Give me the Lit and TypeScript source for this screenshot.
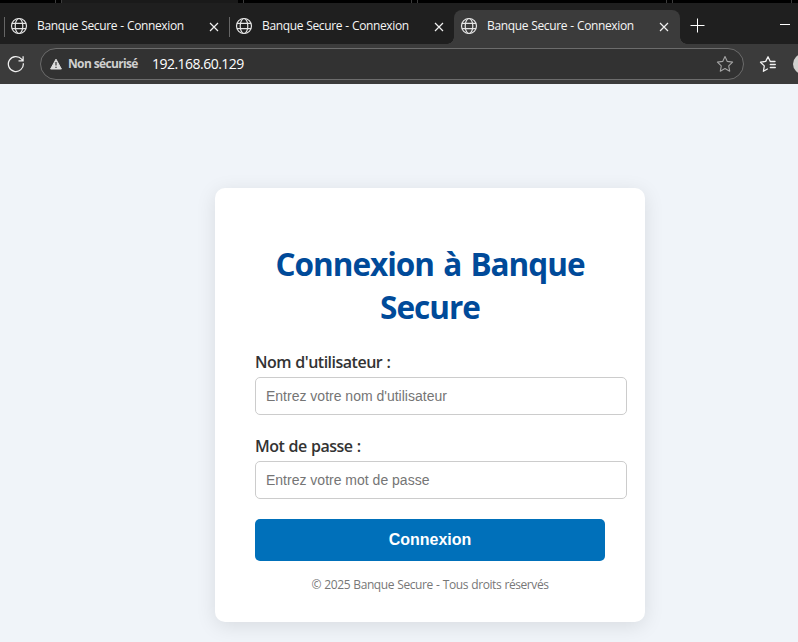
import { LitElement, html, css, svg } from "lit";
import { customElement, property } from "lit/decorators.js";

const globe = svg`<svg class="globe" width="18" height="18" viewBox="0 0 18 18" fill="none" stroke="#e4e4e4" stroke-width="1.2">
  <circle cx="9" cy="9" r="7.5"/><ellipse cx="9" cy="9" rx="3.8" ry="7.5"/><path d="M2 6.3h14M2 11.7h14"/></svg>`;

@customElement("browser-tab")
class BrowserTab extends LitElement {
  @property() label = "";
  static styles = css`
    :host { display: flex; align-items: center; box-sizing: border-box; width: 225px; height: 34px; flex: none; position: relative;
      padding: 0 0 2px 6px; color: #f5f5f5; font: 12px/16px "Open Sans", "Noto Sans", sans-serif; }
    .globe { flex: none; }
    .label { width: 152px; flex: none; margin-left: 9px; white-space: nowrap; letter-spacing: -0.36px; word-spacing: 0.4px; }
    .close { margin: 1px 0 0 20px; flex: none; }
    :host(:not([active]))::before { content: ""; position: absolute; left: 0; top: 7px; width: 1px; height: 20px; background: #666; }
    :host([active]) { width: 226px; background: #3b3b3b; border-radius: 8px 8px 0 0; }
    :host([active])::before, :host([active])::after { content: ""; position: absolute; bottom: 0; width: 7px; height: 7px; }
    :host([active])::before { right: 100%; background: radial-gradient(circle at 0 0, #1f1f1f 6.5px, #3b3b3b 7px); }
    :host([active])::after { left: 100%; background: radial-gradient(circle at 100% 0, #1f1f1f 6.5px, #3b3b3b 7px); }
  `;
  render() {
    return html`${globe}<span class="label">${this.label}</span>
      <svg class="close" width="10" height="10" viewBox="0 0 10 10" stroke="#f0f0f0" stroke-width="1.2"><path d="M1 1l8 8M9 1L1 9"/></svg>`;
  }
}

@customElement("app-root")
class AppRoot extends LitElement {
  static styles = css`
    :host { display: flex; flex-direction: column; height: 642px; overflow: hidden; background: #f0f4f9;
      font-family: "Open Sans", "Noto Sans", sans-serif; }
    .edge { height: 3px; flex: none; background: linear-gradient(#3c3c3c, #3c3c3c) 55px 0 / 1px 3px no-repeat,
      linear-gradient(#3c3c3c, #3c3c3c) 61px 0 / 1px 3px no-repeat, linear-gradient(#3c3c3c, #3c3c3c) 243px 0 / 1px 3px no-repeat,
      linear-gradient(#3c3c3c, #3c3c3c) 411px 0 / 1px 3px no-repeat, linear-gradient(#3c3c3c, #3c3c3c) 417px 0 / 1px 3px no-repeat,
      linear-gradient(#3c3c3c, #3c3c3c) 666px 0 / 1px 3px no-repeat, linear-gradient(#3c3c3c, #3c3c3c) 672px 0 / 1px 3px no-repeat,
      linear-gradient(#3c3c3c, #3c3c3c) 791px 0 / 1px 3px no-repeat,
      linear-gradient(#1a1a1a, #1a1a1a) 62px 0 / 176px 3px no-repeat, #000; }
    .tabs { height: 41px; flex: none; box-sizing: border-box; padding: 7px 0 0 4px; display: flex; background: #1f1f1f; }
    .plus { margin: 8px 0 0 10px; flex: none; }
    .minimize { margin: 14px 8px 0 auto; width: 10px; height: 1px; background: #fff; flex: none; }
    .toolbar { height: 40px; flex: none; display: flex; align-items: center; background: #3b3b3b; }
    .reload { margin: 0 15px 0 7px; flex: none; }
    .address { box-sizing: border-box; width: 704px; height: 32px; flex: none; display: flex; align-items: center; padding: 0 9px 0 8px;
      border: 1px solid #6c6c6c; border-radius: 16px; background: #323232; white-space: nowrap; }
    .warning { font-size: 12px; font-weight: 700; color: #cfcfcf; width: 70px; margin: 0 0 2px 5px; letter-spacing: -0.64px; }
    .url { font-size: 14px; color: #fff; margin: 0 0 2px 14px; letter-spacing: -0.52px; }
    .star { margin-left: auto; }
    .favorites { margin-left: 15px; flex: none; }
    .avatar { width: 20px; height: 20px; flex: none; margin-left: 16px; border-radius: 50%; background: #d1d0ce; }
    .page { flex: 1; padding: 104px 0 0 215px; }
    .card { box-sizing: border-box; width: 430px; height: 434px; padding: 54px 40px 0; border-radius: 10px; background: #fff;
      box-shadow: 0 4px 20px rgba(0, 0, 0, 0.1); }
    h1 { margin: 0 0 23px; font-size: 31.5px; line-height: 43px; font-weight: 700; color: #004a99; text-align: center; white-space: nowrap; letter-spacing: -1px; word-spacing: 2px; }
    label { display: block; height: 22px; margin-bottom: 4px; line-height: 23px; font-size: 16px; font-weight: 600; color: #333; white-space: nowrap; letter-spacing: -0.5px; word-spacing: 0.6px; }
    input { display: block; box-sizing: border-box; width: 372px; height: 38px; margin: 0 0 20px; padding: 10px; border: 1px solid #ccc;
      border-radius: 5px; font: 14px "Liberation Sans", Arial, sans-serif; background: #fff; }
    input::placeholder { color: #757575; }
    button { display: block; width: 350px; height: 42px; padding: 0 0 1px; border: 0; border-radius: 5px; background: #0070ba; color: #fff;
      font: bold 16px "Liberation Sans", Arial, sans-serif; }
    .footer { margin-top: 15px; text-align: center; font-size: 12px; line-height: 18px; color: #777; white-space: nowrap; letter-spacing: -0.43px; word-spacing: 0.6px; }
  `;
  render() {
    const title = "Banque Secure - Connexion";
    return html`
      <div class="edge"></div>
      <div class="tabs">
        <browser-tab label=${title}></browser-tab>
        <browser-tab label=${title}></browser-tab>
        <browser-tab active label=${title}></browser-tab>
        <svg class="plus" width="15" height="15" viewBox="0 0 15 15" stroke="#fff"><path d="M7.5 .5v14M.5 7.5h14"/></svg>
        <span class="minimize"></span>
      </div>
      <div class="toolbar">
        <svg class="reload" width="18" height="18" viewBox="0 0 18 18" fill="none" stroke="#f0f0f0" stroke-width="1.25"><path d="M16.3 8.2A7.5 7.5 0 1 1 14.6 4.2L16 5.7M16.1 1.3v4.6h-4.6"/></svg>
        <div class="address">
          <svg width="14" height="12" viewBox="0 0 14 12"><path d="M7 1.2L12.4 11H1.6z" fill="#dcdcdc" stroke="#dcdcdc" stroke-linejoin="round"/><path d="M7 4v3.6M7 8.7v1.3" stroke="#323232" stroke-width="1.2"/></svg>
          <span class="warning">Non sécurisé</span>
          <span class="url">192.168.60.129</span>
          <svg class="star" width="18" height="18" viewBox="0 0 18 18" fill="none" stroke="#a4a4a4" stroke-width="1.1" stroke-linejoin="round"><path d="M9 1.5l2.3 4.9 5.3.7-3.9 3.7 1 5.4L9 13.6l-4.7 2.6 1-5.4L1.4 7.1l5.3-.7z"/></svg>
        </div>
        <svg class="favorites" width="18" height="18" viewBox="0 0 18 18" fill="none" stroke="#f2f2f2" stroke-width="1.3" stroke-linejoin="round" stroke-linecap="round"><path d="M16 6.5h-4.7L9 1.8 6.7 6.4l-5.2.8 3.8 3.7-.9 5.4L8.4 14M11.3 9.5h5M11.3 12.5h5"/></svg>
        <span class="avatar"></span>
      </div>
      <main class="page">
        <div class="card">
          <h1>Connexion à Banque<br>Secure</h1>
          <label for="user">Nom d'utilisateur :</label>
          <input id="user" placeholder="Entrez votre nom d'utilisateur">
          <label for="pass">Mot de passe :</label>
          <input id="pass" type="password" placeholder="Entrez votre mot de passe">
          <button>Connexion</button>
          <div class="footer">© 2025 Banque Secure - Tous droits réservés</div>
        </div>
      </main>`;
  }
}
